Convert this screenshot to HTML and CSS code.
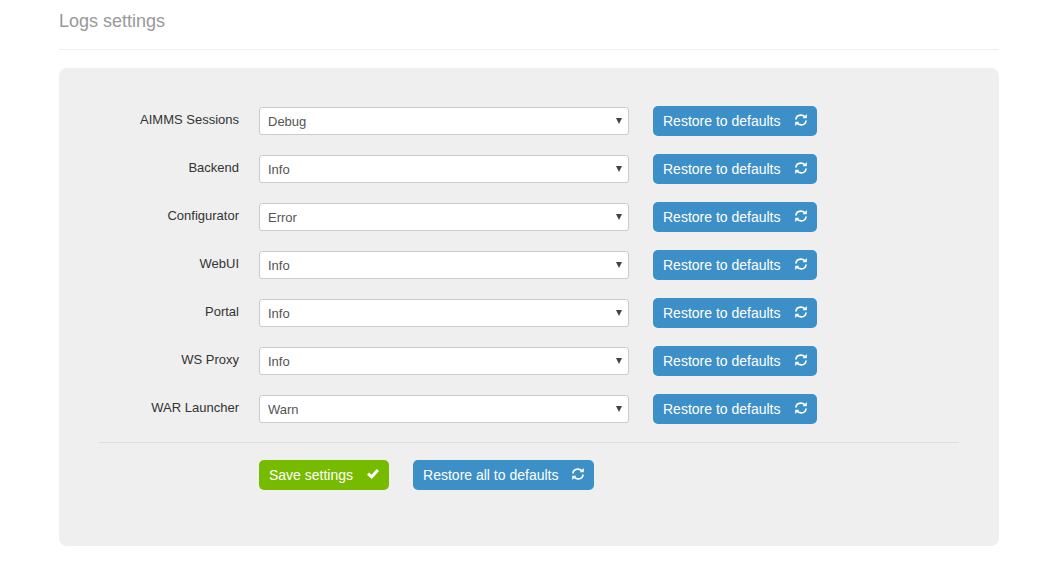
FILE: index.html
```html
<!DOCTYPE html>
<html lang="en">
<head>
    <meta charset="UTF-8">
    <meta name="viewport" content="width=device-width, initial-scale=1.0">
    <title>Logs settings</title>
    <link rel="stylesheet" href="styles.css">
</head>
<body>
    <svg class="sprite" aria-hidden="true">
        <symbol id="icon-refresh" viewBox="0 0 12 12">
            <path d="M1 5.500V5Q1.500 1.300 5.500 1.100Q8 1 9.700 2.600M11 6.500V7Q10.500 10.700 6.500 10.900Q4 11 2.300 9.400" fill="none" stroke="currentColor" stroke-width="1.700"/>
            <path d="M11.800 0V4.200H7.600zM0.200 12V7.800H4.400z" fill="currentColor"/>
        </symbol>
        <symbol id="icon-ok" viewBox="0 0 12 12">
            <path d="M0 6.800L2.100 4.600L4.500 6.700L9.700 1L12 3.100L4.800 11z" fill="currentColor"/>
        </symbol>
    </svg>

    <div class="page">
        <h1>Logs settings</h1>

        <form class="panel">
            <div class="row">
                <label for="sessions">AIMMS Sessions</label>
                <div class="select-box">
                    <select id="sessions"><option>Debug</option><option>Info</option><option>Warn</option><option>Error</option></select>
                </div>
                <button type="button" class="btn">Restore to defaults <svg class="icon"><use href="#icon-refresh"/></svg></button>
            </div>
            <div class="row">
                <label for="backend">Backend</label>
                <div class="select-box">
                    <select id="backend"><option>Debug</option><option selected>Info</option><option>Warn</option><option>Error</option></select>
                </div>
                <button type="button" class="btn">Restore to defaults <svg class="icon"><use href="#icon-refresh"/></svg></button>
            </div>
            <div class="row">
                <label for="configurator">Configurator</label>
                <div class="select-box">
                    <select id="configurator"><option>Debug</option><option>Info</option><option>Warn</option><option selected>Error</option></select>
                </div>
                <button type="button" class="btn">Restore to defaults <svg class="icon"><use href="#icon-refresh"/></svg></button>
            </div>
            <div class="row">
                <label for="webui">WebUI</label>
                <div class="select-box">
                    <select id="webui"><option>Debug</option><option selected>Info</option><option>Warn</option><option>Error</option></select>
                </div>
                <button type="button" class="btn">Restore to defaults <svg class="icon"><use href="#icon-refresh"/></svg></button>
            </div>
            <div class="row">
                <label for="portal">Portal</label>
                <div class="select-box">
                    <select id="portal"><option>Debug</option><option selected>Info</option><option>Warn</option><option>Error</option></select>
                </div>
                <button type="button" class="btn">Restore to defaults <svg class="icon"><use href="#icon-refresh"/></svg></button>
            </div>
            <div class="row">
                <label for="proxy">WS Proxy</label>
                <div class="select-box">
                    <select id="proxy"><option>Debug</option><option selected>Info</option><option>Warn</option><option>Error</option></select>
                </div>
                <button type="button" class="btn">Restore to defaults <svg class="icon"><use href="#icon-refresh"/></svg></button>
            </div>
            <div class="row">
                <label for="launcher">WAR Launcher</label>
                <div class="select-box">
                    <select id="launcher"><option>Debug</option><option>Info</option><option selected>Warn</option><option>Error</option></select>
                </div>
                <button type="button" class="btn">Restore to defaults <svg class="icon"><use href="#icon-refresh"/></svg></button>
            </div>

            <div class="actions">
                <button type="submit" class="btn btn-save">Save settings <svg class="icon"><use href="#icon-ok"/></svg></button>
                <button type="button" class="btn">Restore all to defaults <svg class="icon"><use href="#icon-refresh"/></svg></button>
            </div>
        </form>
    </div>
</body>
</html>
```
FILE: styles.css
```css
* {
    box-sizing: border-box;
}

body {
    margin: 0;
    background-color: #fff;
    color: #333;
    font-family: "Liberation Sans", Arial, Helvetica, sans-serif;
    font-size: 13px;
}

.sprite {
    display: none;
}

.page {
    padding: 0 44px 23px 59px;
}

h1 {
    margin: 0 0 18px;
    padding: 11px 0 17px;
    border-bottom: 1px solid #eee;
    color: #999;
    font-size: 18px;
    font-weight: normal;
    line-height: 21px;
}

.panel {
    padding: 38px 40px 56px;
    border-radius: 8px;
    background-color: #efefef;
}

.row {
    display: grid;
    grid-template-columns: 140px minmax(0, 370px) auto;
    column-gap: 20px;
    align-items: center;
    justify-content: start;
    margin-bottom: 18px;
}

.row label {
    padding-bottom: 4px;
    text-align: right;
}

.row .btn {
    margin-left: 4px;
}

.select-box {
    display: grid;
    align-items: center;
}

/* own arrow, laid in the same grid cell as the select */
.select-box::after {
    content: "";
    grid-area: 1 / 1;
    justify-self: end;
    margin-right: 7px;
    border-top: 6px solid #444;
    border-left: 3px solid transparent;
    border-right: 3px solid transparent;
    pointer-events: none;
}

select {
    grid-area: 1 / 1;
    width: 100%;
    height: 28px;
    padding: 0 24px 0 8px;
    border: 1px solid #ccc;
    border-radius: 3px;
    background-color: #fff;
    color: #555;
    font-family: inherit;
    font-size: 13px;
    appearance: none;
}

.btn {
    display: flex;
    align-items: center;
    gap: 14px;
    height: 30px;
    padding: 0 10px;
    border: 0;
    border-radius: 5px;
    background-color: #3d8fc7;
    color: #fff;
    font-family: inherit;
    font-size: 14px;
    white-space: nowrap;
    cursor: pointer;
}

.btn-save {
    background-color: #77bb00;
}

.icon {
    width: 12px;
    height: 12px;
    margin-bottom: 2px;
}

.actions {
    display: flex;
    gap: 24px;
    padding: 17px 0 0 160px;
    border-top: 1px solid #ddd;
}
```
